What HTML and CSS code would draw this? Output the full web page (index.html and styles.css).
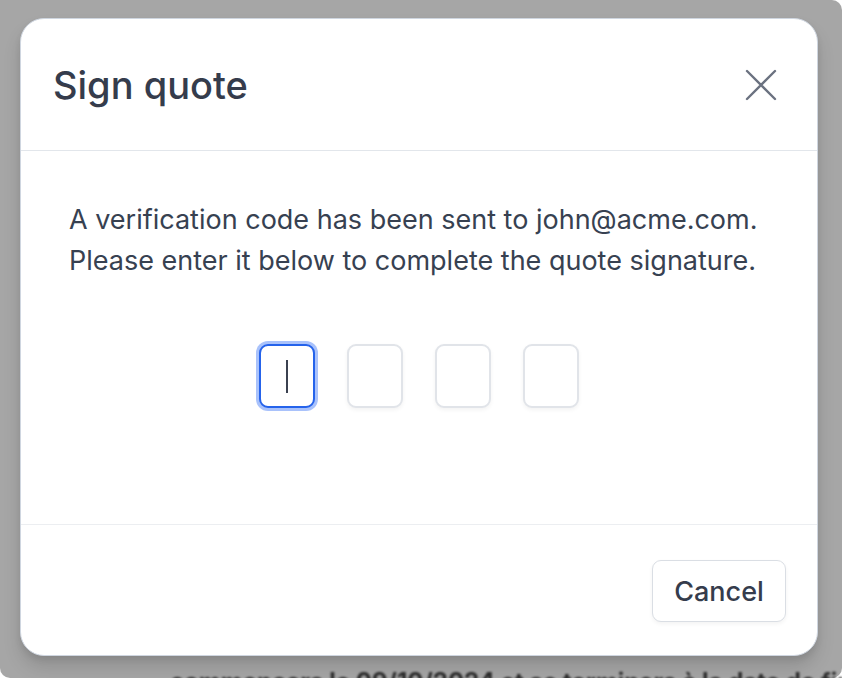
FILE: index.html
```html
<!DOCTYPE html>
<html lang="en">
<head>
<meta charset="utf-8">
<title>Sign quote</title>
<link rel="stylesheet" href="styles.css">
</head>
<body>
<div class="page">
  <p class="behind">commencera le 09/10/2024 et se terminera à la date de fin</p>
</div>
<div class="overlay">
  <div class="modal">
    <div class="modal-header">
      <h1 class="modal-title">Sign quote</h1>
      <button class="close" aria-label="Close">
        <svg width="34" height="34" viewBox="0 0 34 34" fill="none" stroke="#6b7280" stroke-width="2.4" stroke-linecap="round"><path d="M3 3 L31 31 M31 3 L3 31"/></svg>
      </button>
    </div>
    <div class="modal-body">
      <p class="message">A verification code has been sent to john@acme.com.<br>Please enter it below to complete the quote signature.</p>
      <div class="code">
        <div class="digit focused"><span class="caret"></span></div>
        <div class="digit"></div>
        <div class="digit"></div>
        <div class="digit"></div>
      </div>
    </div>
    <div class="modal-footer">
      <button class="btn">Cancel</button>
    </div>
  </div>
</div>
</body>
</html>
```

FILE: styles.css
```css
* { box-sizing: border-box; }
html, body { margin: 0; padding: 0; }
body {
  width: 842px;
  height: 678px;
  overflow: hidden;
  font-family: Inter, "Noto Sans", sans-serif;
  background: #ffffff;
  position: relative;
}
.page {
  height: 678px;
  display: flex;
  align-items: flex-end;
}
.behind {
  margin: 0 0 -18px 170px;
  font-size: 24px;
  font-weight: 700;
  color: #444;
  white-space: nowrap;
  filter: blur(1px);
}
.overlay {
  position: absolute;
  inset: 0;
  background: rgba(0, 0, 0, 0.35);
  border-radius: 0 10px 10px 10px;
  padding: 18px 0 0 20px;
}
.modal {
  width: 798px;
  height: 638px;
  background: #fff;
  border: 1.5px solid #cfd6e0;
  border-radius: 24px;
  box-shadow: 0 12px 18px rgba(0, 0, 0, 0.12), 0 4px 6px rgba(0, 0, 0, 0.08);
  display: flex;
  flex-direction: column;
  overflow: hidden;
}
.modal-header {
  height: 132px;
  flex: none;
  display: flex;
  align-items: center;
  justify-content: space-between;
  padding: 0 39px 0 32px;
  border-bottom: 1.5px solid #e2e6eb;
}
.modal-title {
  margin: 0;
  font-size: 38px;
  font-weight: 500;
  color: #353c4c;
  letter-spacing: 0;
  padding-top: 1px;
}
.close {
  background: none;
  border: 0;
  padding: 0;
  width: 34px;
  height: 34px;
  display: flex;
  cursor: pointer;
}
.modal-body {
  flex: 1;
  padding: 48px 30px 0 48px;
}
.message {
  margin: 0;
  font-size: 27px;
  line-height: 41px;
  color: #374151;
  white-space: nowrap;
}
.code {
  margin-top: 63px;
  display: flex;
  justify-content: center;
  gap: 32px;
  padding-right: 19px;
}
.digit {
  width: 56px;
  height: 64px;
  border: 2px solid #e1e4e9;
  border-radius: 9px;
  box-shadow: 0 2px 4px rgba(0, 0, 0, 0.05);
  display: flex;
  align-items: center;
  justify-content: center;
  background: #fff;
}
.digit.focused {
  border-color: #2563eb;
  box-shadow: 0 0 0 3px #a9c2fb;
}
.caret {
  width: 2px;
  height: 33px;
  background: #3b4150;
}
.modal-footer {
  height: 131px;
  flex: none;
  border-top: 1.5px solid #eceef1;
  display: flex;
  justify-content: flex-end;
  align-items: center;
  padding: 0 31px 0 0;
}
.btn {
  width: 134px;
  height: 62px;
  border: 1.5px solid #dadee4;
  border-radius: 9px;
  background: #fff;
  font-family: Inter, "Noto Sans", sans-serif;
  font-size: 27px;
  font-weight: 500;
  color: #353c4c;
  box-shadow: 0 2px 4px rgba(0, 0, 0, 0.05);
  margin-top: 2px;
}
```
